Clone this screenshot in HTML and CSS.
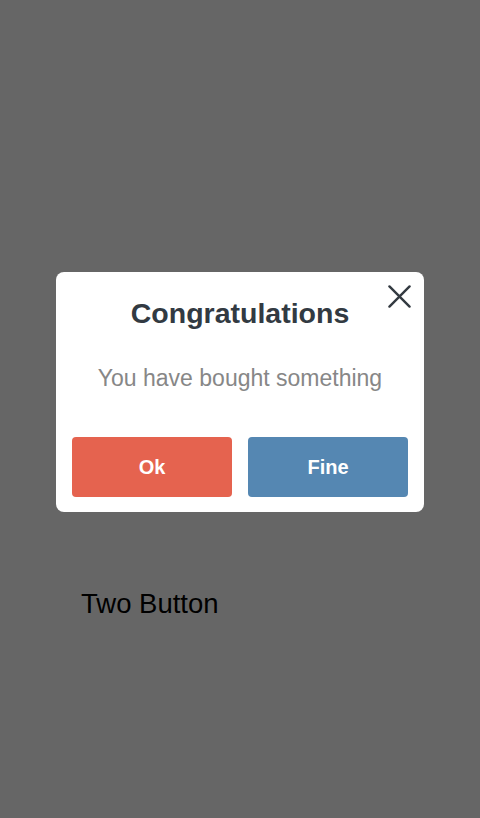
FILE: index.html
```html
<!DOCTYPE html>
<html lang="en">
<head>
<meta charset="utf-8">
<title>Two Button</title>
<link rel="stylesheet" href="styles.css">
</head>
<body>
<main class="page">
  <p class="page-label">Two Button</p>
</main>
<div class="overlay">
  <div class="dialog" role="dialog" aria-labelledby="dlg-title">
    <button class="close" aria-label="Close">
      <svg viewBox="0 0 24 24" width="24" height="24" aria-hidden="true">
        <path d="M1.5 1.5 L22.5 22.5 M22.5 1.5 L1.5 22.5" stroke="#333a41" stroke-width="2.5" stroke-linecap="round" fill="none"/>
      </svg>
    </button>
    <h2 class="dialog-title" id="dlg-title">Congratulations</h2>
    <p class="dialog-message">You have bought something</p>
    <div class="dialog-actions">
      <button class="btn btn-ok">Ok</button>
      <button class="btn btn-fine">Fine</button>
    </div>
  </div>
</div>
</body>
</html>
```

FILE: styles.css
```css
html, body {
  margin: 0;
  padding: 0;
  height: 100%;
}
body {
  background: #ffffff;
  font-family: "Liberation Sans", Arial, Helvetica, sans-serif;
}
.page {
  padding: 589px 0 0 81px;
}
.page-label {
  margin: 0;
  font-size: 27.5px;
  line-height: 30px;
  color: #000;
}
.overlay {
  position: fixed;
  inset: 0;
  background: rgba(0, 0, 0, 0.6);
  display: flex;
  justify-content: center;
  align-items: flex-start;
  padding-top: 272px;
}
.dialog {
  position: relative;
  width: 368px;
  box-sizing: border-box;
  background: #fff;
  border-radius: 8px;
  padding: 25px 16px 15px;
  text-align: center;
}
.close {
  position: absolute;
  top: 11px;
  right: 12px;
  width: 26px;
  height: 26px;
  padding: 1px;
  border: 0;
  background: transparent;
  display: flex;
  align-items: center;
  justify-content: center;
  cursor: pointer;
}
.close svg {
  display: block;
  width: 23px;
  height: 23px;
}
.dialog-title {
  margin: 0;
  font-size: 28.5px;
  line-height: 33px;
  font-weight: bold;
  color: #323a42;
}
.dialog-message {
  margin: 36px 0 0;
  font-size: 23px;
  line-height: 25px;
  color: #878787;
}
.dialog-actions {
  margin-top: 46px;
  display: flex;
  gap: 16px;
}
.btn {
  flex: 1;
  height: 60px;
  border: 0;
  border-radius: 4px;
  color: #fff;
  font-family: "Liberation Sans", Arial, Helvetica, sans-serif;
  font-size: 20px;
  font-weight: bold;
  cursor: pointer;
}
.btn-ok {
  background: #e5634f;
}
.btn-fine {
  background: #5587b2;
}
```
